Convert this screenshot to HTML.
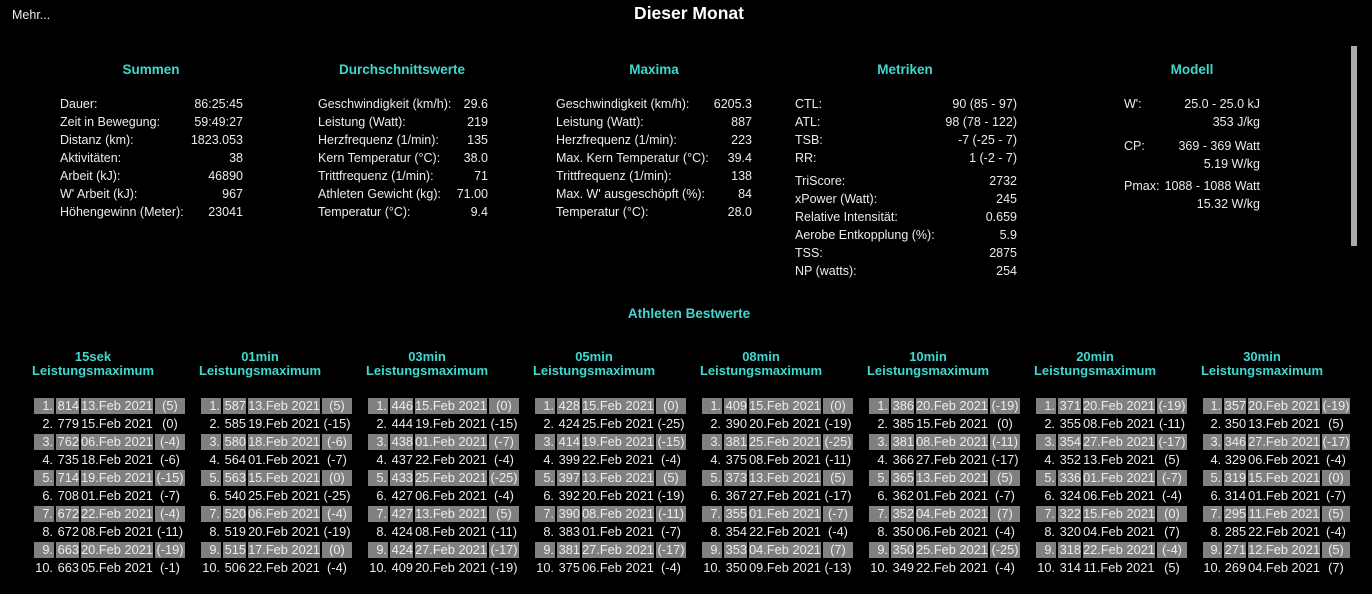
<!DOCTYPE html>
<html><head><meta charset="utf-8"><style>
html,body{margin:0;padding:0;background:#000;width:1372px;height:594px;overflow:hidden;position:relative;font-family:"Liberation Sans","DejaVu Sans",sans-serif;font-size:12.5px;color:#ececec}
.a{position:absolute;white-space:nowrap;line-height:18px}
.h{position:absolute;color:#3fd8d0;font-weight:bold;font-size:13.5px;white-space:nowrap;transform:translateX(-50%);line-height:16px;text-align:center}
.r{text-align:right}
table.s{position:absolute;border-collapse:collapse}
table.s td{padding:0;height:18px;line-height:18px;white-space:nowrap}
table.b{position:absolute;border-collapse:separate;border-spacing:2px;font-size:12.8px}
table.b td{padding:0;height:16px;line-height:16px;white-space:nowrap}
table.b td:nth-child(1){width:20px;text-align:right;padding-right:1px;box-sizing:border-box}
table.b td:nth-child(2){width:23px;text-align:right}
table.b td:nth-child(3){width:72px;text-align:center}
table.b td:nth-child(4){width:30px;text-align:center}
table.b tr.g td{background:#808080}
.sb{position:absolute;left:1351px;top:46px;width:6px;height:200px;background:#aaa}
.clip{position:absolute;left:0;top:0;width:1352px;height:594px;overflow:hidden}
</style></head><body>
<div class="a" style="left:12px;top:6px">Mehr...</div>
<div class="h" style="left:689px;top:3px;font-size:17.5px;color:#fff;line-height:20px">Dieser Monat</div>
<div class="sb"></div>

<div class="h" style="left:151px;top:62px">Summen</div>
<div class="h" style="left:402px;top:62px">Durchschnittswerte</div>
<div class="h" style="left:654px;top:62px">Maxima</div>
<div class="h" style="left:905px;top:62px">Metriken</div>
<div class="h" style="left:1192px;top:62px">Modell</div>

<table class="s" style="left:60px;top:95px;width:183px">
<tr><td>Dauer:</td><td class="r">86:25:45</td></tr>
<tr><td>Zeit in Bewegung:</td><td class="r">59:49:27</td></tr>
<tr><td>Distanz (km):</td><td class="r">1823.053</td></tr>
<tr><td>Aktivitäten:</td><td class="r">38</td></tr>
<tr><td>Arbeit (kJ):</td><td class="r">46890</td></tr>
<tr><td>W' Arbeit (kJ):</td><td class="r">967</td></tr>
<tr><td>Höhengewinn (Meter):</td><td class="r">23041</td></tr>
</table>
<table class="s" style="left:318px;top:95px;width:170px">
<tr><td>Geschwindigkeit (km/h):</td><td class="r">29.6</td></tr>
<tr><td>Leistung (Watt):</td><td class="r">219</td></tr>
<tr><td>Herzfrequenz (1/min):</td><td class="r">135</td></tr>
<tr><td>Kern Temperatur (°C):</td><td class="r">38.0</td></tr>
<tr><td>Trittfrequenz (1/min):</td><td class="r">71</td></tr>
<tr><td>Athleten Gewicht (kg):</td><td class="r">71.00</td></tr>
<tr><td>Temperatur (°C):</td><td class="r">9.4</td></tr>
</table>
<table class="s" style="left:556px;top:95px;width:196px">
<tr><td>Geschwindigkeit (km/h):</td><td class="r">6205.3</td></tr>
<tr><td>Leistung (Watt):</td><td class="r">887</td></tr>
<tr><td>Herzfrequenz (1/min):</td><td class="r">223</td></tr>
<tr><td>Max. Kern Temperatur (°C):</td><td class="r">39.4</td></tr>
<tr><td>Trittfrequenz (1/min):</td><td class="r">138</td></tr>
<tr><td>Max. W' ausgeschöpft (%):</td><td class="r">84</td></tr>
<tr><td>Temperatur (°C):</td><td class="r">28.0</td></tr>
</table>
<table class="s" style="left:795px;top:95px;width:222px">
<tr><td>CTL:</td><td class="r">90 (85 - 97)</td></tr>
<tr><td>ATL:</td><td class="r">98 (78 - 122)</td></tr>
<tr><td>TSB:</td><td class="r">-7 (-25 - 7)</td></tr>
<tr><td>RR:</td><td class="r">1 (-2 - 7)</td></tr>
<tr><td style="height:23px;vertical-align:bottom">TriScore:</td><td class="r" style="vertical-align:bottom">2732</td></tr>
<tr><td>xPower (Watt):</td><td class="r">245</td></tr>
<tr><td>Relative Intensität:</td><td class="r">0.659</td></tr>
<tr><td>Aerobe Entkopplung (%):</td><td class="r">5.9</td></tr>
<tr><td>TSS:</td><td class="r">2875</td></tr>
<tr><td>NP (watts):</td><td class="r">254</td></tr>
</table>
<table class="s" style="left:1124px;top:95px;width:136px">
<tr><td>W':</td><td class="r">25.0 - 25.0 kJ</td></tr>
<tr><td></td><td class="r">353 J/kg</td></tr>
<tr><td style="height:24px;vertical-align:bottom">CP:</td><td class="r" style="vertical-align:bottom">369 - 369 Watt</td></tr>
<tr><td></td><td class="r">5.19 W/kg</td></tr>
<tr><td colspan="2" class="r" style="height:22px;vertical-align:bottom"><span style="float:left">Pmax:</span> 1088 - 1088 Watt</td></tr>
<tr><td></td><td class="r">15.32 W/kg</td></tr>
</table>

<div class="h" style="left:689px;top:306px">Athleten Bestwerte</div>

<div class="clip">
<div class="h" style="left:93px;top:350px;font-size:13px;line-height:14px">15sek<br>Leistungsmaximum</div>
<div class="h" style="left:260px;top:350px;font-size:13px;line-height:14px">01min<br>Leistungsmaximum</div>
<div class="h" style="left:427px;top:350px;font-size:13px;line-height:14px">03min<br>Leistungsmaximum</div>
<div class="h" style="left:594px;top:350px;font-size:13px;line-height:14px">05min<br>Leistungsmaximum</div>
<div class="h" style="left:761px;top:350px;font-size:13px;line-height:14px">08min<br>Leistungsmaximum</div>
<div class="h" style="left:928px;top:350px;font-size:13px;line-height:14px">10min<br>Leistungsmaximum</div>
<div class="h" style="left:1095px;top:350px;font-size:13px;line-height:14px">20min<br>Leistungsmaximum</div>
<div class="h" style="left:1262px;top:350px;font-size:13px;line-height:14px">30min<br>Leistungsmaximum</div>

<table class="b" style="left:32px;top:396px">
<tr class="g"><td>1.</td><td>814</td><td>13.Feb 2021</td><td>(5)</td></tr>
<tr><td>2.</td><td>779</td><td>15.Feb 2021</td><td>(0)</td></tr>
<tr class="g"><td>3.</td><td>762</td><td>06.Feb 2021</td><td>(-4)</td></tr>
<tr><td>4.</td><td>735</td><td>18.Feb 2021</td><td>(-6)</td></tr>
<tr class="g"><td>5.</td><td>714</td><td>19.Feb 2021</td><td>(-15)</td></tr>
<tr><td>6.</td><td>708</td><td>01.Feb 2021</td><td>(-7)</td></tr>
<tr class="g"><td>7.</td><td>672</td><td>22.Feb 2021</td><td>(-4)</td></tr>
<tr><td>8.</td><td>672</td><td>08.Feb 2021</td><td>(-11)</td></tr>
<tr class="g"><td>9.</td><td>663</td><td>20.Feb 2021</td><td>(-19)</td></tr>
<tr><td>10.</td><td>663</td><td>05.Feb 2021</td><td>(-1)</td></tr>
</table>
<table class="b" style="left:199px;top:396px">
<tr class="g"><td>1.</td><td>587</td><td>13.Feb 2021</td><td>(5)</td></tr>
<tr><td>2.</td><td>585</td><td>19.Feb 2021</td><td>(-15)</td></tr>
<tr class="g"><td>3.</td><td>580</td><td>18.Feb 2021</td><td>(-6)</td></tr>
<tr><td>4.</td><td>564</td><td>01.Feb 2021</td><td>(-7)</td></tr>
<tr class="g"><td>5.</td><td>563</td><td>15.Feb 2021</td><td>(0)</td></tr>
<tr><td>6.</td><td>540</td><td>25.Feb 2021</td><td>(-25)</td></tr>
<tr class="g"><td>7.</td><td>520</td><td>06.Feb 2021</td><td>(-4)</td></tr>
<tr><td>8.</td><td>519</td><td>20.Feb 2021</td><td>(-19)</td></tr>
<tr class="g"><td>9.</td><td>515</td><td>17.Feb 2021</td><td>(0)</td></tr>
<tr><td>10.</td><td>506</td><td>22.Feb 2021</td><td>(-4)</td></tr>
</table>
<table class="b" style="left:366px;top:396px">
<tr class="g"><td>1.</td><td>446</td><td>15.Feb 2021</td><td>(0)</td></tr>
<tr><td>2.</td><td>444</td><td>19.Feb 2021</td><td>(-15)</td></tr>
<tr class="g"><td>3.</td><td>438</td><td>01.Feb 2021</td><td>(-7)</td></tr>
<tr><td>4.</td><td>437</td><td>22.Feb 2021</td><td>(-4)</td></tr>
<tr class="g"><td>5.</td><td>433</td><td>25.Feb 2021</td><td>(-25)</td></tr>
<tr><td>6.</td><td>427</td><td>06.Feb 2021</td><td>(-4)</td></tr>
<tr class="g"><td>7.</td><td>427</td><td>13.Feb 2021</td><td>(5)</td></tr>
<tr><td>8.</td><td>424</td><td>08.Feb 2021</td><td>(-11)</td></tr>
<tr class="g"><td>9.</td><td>424</td><td>27.Feb 2021</td><td>(-17)</td></tr>
<tr><td>10.</td><td>409</td><td>20.Feb 2021</td><td>(-19)</td></tr>
</table>
<table class="b" style="left:533px;top:396px">
<tr class="g"><td>1.</td><td>428</td><td>15.Feb 2021</td><td>(0)</td></tr>
<tr><td>2.</td><td>424</td><td>25.Feb 2021</td><td>(-25)</td></tr>
<tr class="g"><td>3.</td><td>414</td><td>19.Feb 2021</td><td>(-15)</td></tr>
<tr><td>4.</td><td>399</td><td>22.Feb 2021</td><td>(-4)</td></tr>
<tr class="g"><td>5.</td><td>397</td><td>13.Feb 2021</td><td>(5)</td></tr>
<tr><td>6.</td><td>392</td><td>20.Feb 2021</td><td>(-19)</td></tr>
<tr class="g"><td>7.</td><td>390</td><td>08.Feb 2021</td><td>(-11)</td></tr>
<tr><td>8.</td><td>383</td><td>01.Feb 2021</td><td>(-7)</td></tr>
<tr class="g"><td>9.</td><td>381</td><td>27.Feb 2021</td><td>(-17)</td></tr>
<tr><td>10.</td><td>375</td><td>06.Feb 2021</td><td>(-4)</td></tr>
</table>
<table class="b" style="left:700px;top:396px">
<tr class="g"><td>1.</td><td>409</td><td>15.Feb 2021</td><td>(0)</td></tr>
<tr><td>2.</td><td>390</td><td>20.Feb 2021</td><td>(-19)</td></tr>
<tr class="g"><td>3.</td><td>381</td><td>25.Feb 2021</td><td>(-25)</td></tr>
<tr><td>4.</td><td>375</td><td>08.Feb 2021</td><td>(-11)</td></tr>
<tr class="g"><td>5.</td><td>373</td><td>13.Feb 2021</td><td>(5)</td></tr>
<tr><td>6.</td><td>367</td><td>27.Feb 2021</td><td>(-17)</td></tr>
<tr class="g"><td>7.</td><td>355</td><td>01.Feb 2021</td><td>(-7)</td></tr>
<tr><td>8.</td><td>354</td><td>22.Feb 2021</td><td>(-4)</td></tr>
<tr class="g"><td>9.</td><td>353</td><td>04.Feb 2021</td><td>(7)</td></tr>
<tr><td>10.</td><td>350</td><td>09.Feb 2021</td><td>(-13)</td></tr>
</table>
<table class="b" style="left:867px;top:396px">
<tr class="g"><td>1.</td><td>386</td><td>20.Feb 2021</td><td>(-19)</td></tr>
<tr><td>2.</td><td>385</td><td>15.Feb 2021</td><td>(0)</td></tr>
<tr class="g"><td>3.</td><td>381</td><td>08.Feb 2021</td><td>(-11)</td></tr>
<tr><td>4.</td><td>366</td><td>27.Feb 2021</td><td>(-17)</td></tr>
<tr class="g"><td>5.</td><td>365</td><td>13.Feb 2021</td><td>(5)</td></tr>
<tr><td>6.</td><td>362</td><td>01.Feb 2021</td><td>(-7)</td></tr>
<tr class="g"><td>7.</td><td>352</td><td>04.Feb 2021</td><td>(7)</td></tr>
<tr><td>8.</td><td>350</td><td>06.Feb 2021</td><td>(-4)</td></tr>
<tr class="g"><td>9.</td><td>350</td><td>25.Feb 2021</td><td>(-25)</td></tr>
<tr><td>10.</td><td>349</td><td>22.Feb 2021</td><td>(-4)</td></tr>
</table>
<table class="b" style="left:1034px;top:396px">
<tr class="g"><td>1.</td><td>371</td><td>20.Feb 2021</td><td>(-19)</td></tr>
<tr><td>2.</td><td>355</td><td>08.Feb 2021</td><td>(-11)</td></tr>
<tr class="g"><td>3.</td><td>354</td><td>27.Feb 2021</td><td>(-17)</td></tr>
<tr><td>4.</td><td>352</td><td>13.Feb 2021</td><td>(5)</td></tr>
<tr class="g"><td>5.</td><td>336</td><td>01.Feb 2021</td><td>(-7)</td></tr>
<tr><td>6.</td><td>324</td><td>06.Feb 2021</td><td>(-4)</td></tr>
<tr class="g"><td>7.</td><td>322</td><td>15.Feb 2021</td><td>(0)</td></tr>
<tr><td>8.</td><td>320</td><td>04.Feb 2021</td><td>(7)</td></tr>
<tr class="g"><td>9.</td><td>318</td><td>22.Feb 2021</td><td>(-4)</td></tr>
<tr><td>10.</td><td>314</td><td>11.Feb 2021</td><td>(5)</td></tr>
</table>
<table class="b" style="left:1201px;top:396px">
<tr class="g"><td>1.</td><td>357</td><td>20.Feb 2021</td><td>(-19)</td></tr>
<tr><td>2.</td><td>350</td><td>13.Feb 2021</td><td>(5)</td></tr>
<tr class="g"><td>3.</td><td>346</td><td>27.Feb 2021</td><td>(-17)</td></tr>
<tr><td>4.</td><td>329</td><td>06.Feb 2021</td><td>(-4)</td></tr>
<tr class="g"><td>5.</td><td>319</td><td>15.Feb 2021</td><td>(0)</td></tr>
<tr><td>6.</td><td>314</td><td>01.Feb 2021</td><td>(-7)</td></tr>
<tr class="g"><td>7.</td><td>295</td><td>11.Feb 2021</td><td>(5)</td></tr>
<tr><td>8.</td><td>285</td><td>22.Feb 2021</td><td>(-4)</td></tr>
<tr class="g"><td>9.</td><td>271</td><td>12.Feb 2021</td><td>(5)</td></tr>
<tr><td>10.</td><td>269</td><td>04.Feb 2021</td><td>(7)</td></tr>
</table>
</div>
</body></html>
